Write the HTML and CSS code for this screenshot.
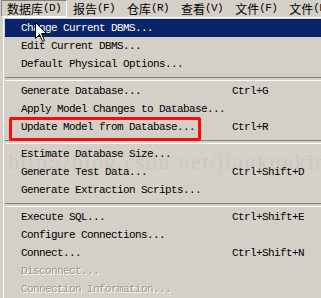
FILE: index.html
```html
<!DOCTYPE html>
<html lang="zh">
<head>
    <meta charset="UTF-8">
    <title>数据库菜单</title>
    <link rel="stylesheet" href="styles.css">
</head>
<body>
    <div class="menubar">
        <span class="bar-item active">数据库<span class="key">(D)</span></span>
        <span class="bar-item">报告<span class="key">(F)</span></span>
        <span class="bar-item">仓库<span class="key">(R)</span></span>
        <span class="bar-item">查看<span class="key">(V)</span></span>
        <span class="bar-item">文件<span class="key">(F)</span></span>
        <span class="bar-item">文件<span class="key">(F)</span></span>
    </div>

    <div class="menu">
        <div class="row selected"><span class="label">Change Current DBMS...</span></div>
        <div class="row"><span class="label">Edit Current DBMS...</span></div>
        <div class="row"><span class="label">Default Physical Options...</span></div>
        <div class="sep"></div>
        <div class="row"><span class="label">Generate Database...</span><span class="shortcut">Ctrl+G</span></div>
        <div class="row"><span class="label">Apply Model Changes to Database...</span></div>
        <div class="row marked"><span class="label">Update Model from Database...</span><span class="shortcut">Ctrl+R</span><span class="mark"></span></div>
        <div class="sep"></div>
        <div class="row"><span class="label">Estimate Database Size...</span></div>
        <div class="row"><span class="label">Generate Test Data...</span><span class="shortcut">Ctrl+Shift+D</span></div>
        <div class="row"><span class="label">Generate Extraction Scripts...</span></div>
        <div class="sep"></div>
        <div class="row"><span class="label">Execute SQL...</span><span class="shortcut">Ctrl+Shift+E</span></div>
        <div class="row"><span class="label">Configure Connections...</span></div>
        <div class="row"><span class="label">Connect...</span><span class="shortcut">Ctrl+Shift+N</span></div>
        <div class="row disabled"><span class="label">Disconnect...</span></div>
        <div class="row disabled"><span class="label">Connection Information...</span></div>

        <div class="watermark">http://blog.csdn.net/jiankunking</div>
    </div>

    <svg class="cursor" width="13" height="21" viewBox="0 0 13 21">
        <path d="M0.5 0.5 L0.5 16.5 L4.5 12.5 L7.5 19.5 L9.5 18.5 L6.5 11.5 L11.5 11.5 Z" fill="#fff" stroke="#000" stroke-width="1"/>
    </svg>
</body>
</html>
```

FILE: styles.css
```css
* {
    margin: 0;
    padding: 0;
    box-sizing: border-box;
}

body {
    width: 321px;
    height: 298px;
    overflow: hidden;
    position: relative;
    background-color: #d4d0c8;
    font-family: "Liberation Mono", "DejaVu Sans Mono", monospace;
    font-size: 11px;
    letter-spacing: -0.6px;
    color: #000;
}

.menubar {
    display: flex;
    height: 17px;
    padding-left: 1px;
    white-space: nowrap;
}

.bar-item {
    display: flex;
    align-items: center;
    padding: 0 6px;
    font-family: "Noto Sans CJK SC", sans-serif;
    font-size: 12px;
    letter-spacing: 0;
    line-height: 1;
}

.bar-item.active {
    padding: 0 5px;
    border: 1px solid;
    border-color: #808080 #fff #fff #808080;
}

.key {
    font-family: "Liberation Mono", monospace;
    font-size: 11px;
    letter-spacing: -0.6px;
}

.menu {
    position: relative;
    margin-left: 3px;
    padding: 1px 0 0 1px;
    border-top: 1px solid #fff;
    border-left: 1px solid #fff;
}

.row {
    position: relative;
    display: flex;
    height: 18px;
    align-items: center;
    padding-left: 16px;
    white-space: nowrap;
}

.label {
    width: 211px;
}

.selected {
    background-color: #0a246a;
    color: #fff;
}

.disabled {
    color: #9c988f;
    text-shadow: 1px 1px 0 #fff;
}

.sep {
    height: 9px;
    padding-top: 4px;
}

.sep::before {
    content: "";
    display: block;
    height: 2px;
    border-top: 1px solid #808080;
    border-bottom: 1px solid #fff;
}

.mark {
    position: absolute;
    left: 4px;
    top: -1px;
    width: 192px;
    height: 24px;
    border: 3px solid #ff0a0a;
    border-radius: 2px;
}

.watermark {
    position: absolute;
    left: 4px;
    top: 133px;
    font-family: "Liberation Serif", serif;
    font-size: 22px;
    letter-spacing: 1.6px;
    line-height: 1;
    color: rgba(150, 146, 138, 0.18);
    white-space: nowrap;
    pointer-events: none;
}

.cursor {
    position: absolute;
    left: 35px;
    top: 22px;
}
```
